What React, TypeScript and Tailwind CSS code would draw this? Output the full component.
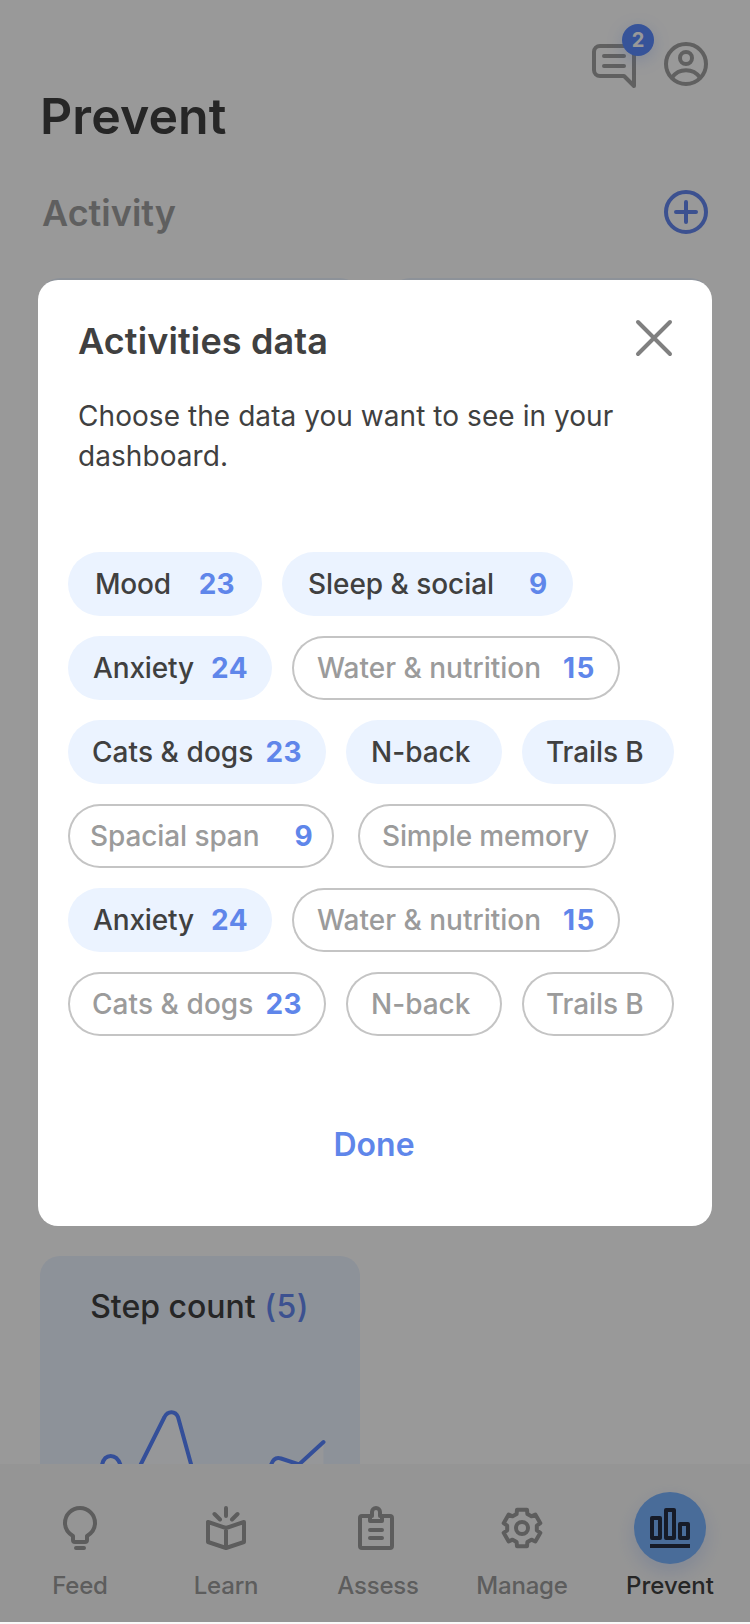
import type { ReactNode } from "react";

type ChipData = { label: string; count?: number; on?: boolean; box: string; gap?: string; spacing?: string };

const anxiety: ChipData = {
  label: "Anxiety",
  count: 24,
  on: true,
  box: "w-[204px] pl-[25px]",
  gap: "ml-[17px] tracking-[0.5px]",
  spacing: "tracking-[-0.15px]",
};

const water: ChipData = {
  label: "Water & nutrition",
  count: 15,
  box: "w-[328px] pl-[25px] ml-5",
  gap: "ml-[22px] tracking-[1.5px]",
};

const chipRows: ChipData[][] = [
  [
    { label: "Mood", count: 23, on: true, box: "w-[194px] pl-[27px]", gap: "ml-7 tracking-[0.3px]", spacing: "tracking-[-0.25px]" },
    { label: "Sleep & social", count: 9, on: true, box: "w-[291px] pl-[26px] ml-5", gap: "ml-[35px]", spacing: "tracking-[-0.05px]" },
  ],
  [anxiety, water],
  [
    { label: "Cats & dogs", count: 23, on: true, box: "w-[258px] pl-6", gap: "ml-3 tracking-[0.3px]", spacing: "tracking-[0.07px]" },
    { label: "N-back", on: true, box: "w-[156px] pl-[25px] ml-5" },
    { label: "Trails B", on: true, box: "w-[152px] pl-6 ml-5", spacing: "tracking-[-0.1px]" },
  ],
  [
    { label: "Spacial span", count: 9, box: "w-[266px] pl-[22px]", gap: "ml-[35px]", spacing: "tracking-[-0.1px]" },
    { label: "Simple memory", box: "w-[258px] pl-6 ml-6", spacing: "tracking-[-0.14px]" },
  ],
  [anxiety, water],
  [
    { label: "Cats & dogs", count: 23, box: "w-[258px] pl-6", gap: "ml-3 tracking-[0.3px]", spacing: "tracking-[0.07px]" },
    { label: "N-back", box: "w-[156px] pl-[25px] ml-5" },
    { label: "Trails B", box: "w-[152px] pl-6 ml-5", spacing: "tracking-[-0.1px]" },
  ],
];

function Chip({ label, count, on, box, gap = "", spacing = "" }: ChipData) {
  const tone = on
    ? "bg-[#ebf3ff] text-[#404040]"
    : "bg-white text-[#9b9b9b] shadow-[inset_0_0_0_2px_#c4c4c4]";
  return (
    <button className={`flex h-16 shrink-0 items-center rounded-full text-[28px] font-medium whitespace-nowrap ${tone} ${box}`}>
      <span className={spacing}>{label}</span>
      {count !== undefined && <span className={`font-bold text-[#5f86ea] ${gap}`}>{count}</span>}
    </button>
  );
}

function Icon({ children, className = "" }: { children: ReactNode; className?: string }) {
  return (
    <svg
      viewBox="0 0 44 44"
      className={`block h-11 w-11 shrink-0 overflow-visible ${className}`}
      fill="none"
      stroke="currentColor"
      strokeWidth="4"
      strokeLinecap="round"
      strokeLinejoin="round"
    >
      {children}
    </svg>
  );
}

const gearPoints = Array.from({ length: 6 }, (_, k) => {
  const a = (k * Math.PI) / 3;
  return [[-5.4, -14], [-5, -18.3], [5, -18.3], [5.4, -14]]
    .map(([x, y]) => {
      const px = 22 + x * Math.cos(a) - y * Math.sin(a);
      const py = 22 + x * Math.sin(a) + y * Math.cos(a);
      return `${px.toFixed(2)},${py.toFixed(2)}`;
    })
    .join(" ");
}).join(" ");

function NavItem({ label, active, offset = "", children }: { label: string; active?: boolean; offset?: string; children: ReactNode }) {
  return (
    <div className={`flex w-[120px] shrink-0 flex-col items-center ${active ? "text-[#404040]" : "text-[#9b9b9b]"} ${offset}`}>
      <div
        className={`flex h-[72px] w-[72px] items-center justify-center rounded-full ${
          active ? "bg-[#7bb4ff] text-[#252d43] shadow-[0_8px_20px_rgba(91,139,255,0.22)]" : ""
        }`}
      >
        {children}
      </div>
      <span className={`mt-[10px] text-2xl leading-6 font-medium ${active ? "" : "tracking-[-0.2px]"}`}>{label}</span>
    </div>
  );
}

function StepChart() {
  const line =
    "M40 250 L62 209 C64.500 197 76.500 197 80.500 209 L88 228 Q91 232 94 222 L101 208 L124.500 161 C127.500 154.500 135.500 154.500 138 161 L151 208 L160 245 L220 245 L231 209 C233 203 236 201 241 202.500 L259 208.500 L283.500 186";
  return (
    <svg viewBox="0 0 320 296" className="block h-[225px] w-[320px] overflow-hidden" preserveAspectRatio="xMidYMax slice" fill="none">
      <path d={`${line} V296 H40 Z`} fill="white" fillOpacity="0.75" />
      <path d={line} stroke="#5784ff" strokeWidth="4" strokeLinecap="round" strokeLinejoin="round" />
    </svg>
  );
}

export default function App() {
  return (
    <div className="relative flex h-[1624px] w-[750px] flex-col overflow-hidden bg-white font-['Inter',sans-serif] text-[#404040]">
      <div className="flex h-[1464px] shrink-0 flex-col overflow-hidden px-10">
        <header className="flex h-[166px] shrink-0 items-start justify-between">
          <h1 className="mt-[86px] text-[50px] leading-[60px] font-semibold tracking-[0.1px]">Prevent</h1>
          <div className="mt-[42px] mr-[2px] flex gap-7 text-[#a0a0a0]">
            <div className="relative mt-[2px]">
              <Icon>
                <path d="M42 42 32 32H8a6 6 0 0 1-6-6V8a6 6 0 0 1 6-6h34v40ZM12 12h20M12 22h20" />
              </Icon>
              <span className="absolute -top-5 left-[30px] flex h-8 w-8 items-center justify-center rounded-full bg-[#5a8bff] text-xl font-bold text-white shadow-[0_4px_16px_rgba(91,139,255,0.25)]">
                2
              </span>
            </div>
            <Icon>
              <circle cx="22" cy="22" r="20" />
              <circle cx="22" cy="16" r="6" />
              <path d="M8 35.500A17 17 0 0 1 36 35.500" />
            </Icon>
          </div>
        </header>

        <div className="flex h-[112px] shrink-0 items-start justify-between pt-6 pr-[2px] pl-[2px]">
          <h2 className="text-[36px] leading-[46px] font-semibold text-[#9f9f9f]">Activity</h2>
          <Icon className="text-[#6487f0]">
            <circle cx="22" cy="22" r="20" />
            <path d="M22 12v20M12 22h20" />
          </Icon>
        </div>

        <div className="grid grid-cols-[320px_320px] gap-[30px]">
          {[0, 1, 2, 3, 4, 5].map((i) => (
            <div key={i} className="h-[296px] rounded-[20px] bg-[#ebf3ff]" />
          ))}
          <div className="h-[296px] overflow-hidden rounded-[20px] bg-[#ebf3ff] pt-[31px]">
            <h3 className="-ml-px text-center text-[32px] leading-10 font-medium">
              Step count <span className="tracking-[0.4px] text-[#6487f0]">(5)</span>
            </h3>
            <StepChart />
          </div>
        </div>
      </div>

      <nav className="flex h-[160px] shrink-0 bg-[#f9f9f9] pt-7 pl-5">
        <NavItem label="Feed">
          <Icon>
            <path d="M15 30C10 27 7 22 7 17a15 15 0 0 1 30 0c0 5-3 10-8 13v4a2 2 0 0 1-2 2H17a2 2 0 0 1-2-2ZM18 42h8" />
          </Icon>
        </NavItem>
        <NavItem label="Learn" offset="ml-[26px]">
          <Icon>
            <path d="M22 22 4 16v20l18 6 18-6V16ZM22 22v20M22 2v8M10.500 8l5.500 5.500M33.500 8 28 13.500" />
          </Icon>
        </NavItem>
        <NavItem label="Assess" offset="ml-8">
          <Icon className="mr-1">
            <path d="M16 10H8a2 2 0 0 0-2 2v28a2 2 0 0 0 2 2h28a2 2 0 0 0 2-2V12a2 2 0 0 0-2-2h-8" />
            <path d="M16 10h2V6a4 4 0 0 1 8 0v4h2v5H16ZM16 24h12M16 32h12" />
          </Icon>
        </NavItem>
        <NavItem label="Manage" offset="ml-6">
          <Icon>
            <polygon points={gearPoints} />
            <circle cx="22" cy="22" r="6" />
          </Icon>
        </NavItem>
        <NavItem label="Prevent" active offset="ml-7">
          <Icon>
            <path d="M4 12h8v20H4ZM18 4h8v28h-8ZM32 18h8v14h-8Z" />
            <path d="M2 40h40" strokeLinecap="butt" />
          </Icon>
        </NavItem>
      </nav>

      <div className="absolute inset-x-0 top-0 flex h-[1622px] items-start justify-center bg-black/40 pt-[280px]">
        <section role="dialog" className="flex h-[946px] w-[674px] flex-col rounded-[20px] bg-white pt-[39px]">
          <div className="flex items-start justify-between pr-[36px] pl-10">
            <h2 className="text-[36px] leading-[44px] font-semibold tracking-[0.12px]">Activities data</h2>
            <button aria-label="Close" className="-mt-[5px] mr-[2px] h-11 text-[#808080]">
              <Icon>
                <path d="M6 8 38 40M38 8 6 40" transform="translate(2 0)" />
              </Icon>
            </button>
          </div>
          <p className="mt-[33px] pr-10 pl-10 text-[28px] leading-10 tracking-[0.06px]">
            Choose the data you want to see in your dashboard.
          </p>
          <div className="mt-[76px] flex flex-col gap-5 pl-[30px]">
            {chipRows.map((row, i) => (
              <div key={i} className="flex">
                {row.map((chip) => (
                  <Chip key={chip.label} {...chip} />
                ))}
              </div>
            ))}
          </div>
          <button className="mt-[89px] mr-[2px] self-center text-[32px] leading-10 font-semibold text-[#5f86ea]">Done</button>
        </section>
      </div>
    </div>
  );
}
